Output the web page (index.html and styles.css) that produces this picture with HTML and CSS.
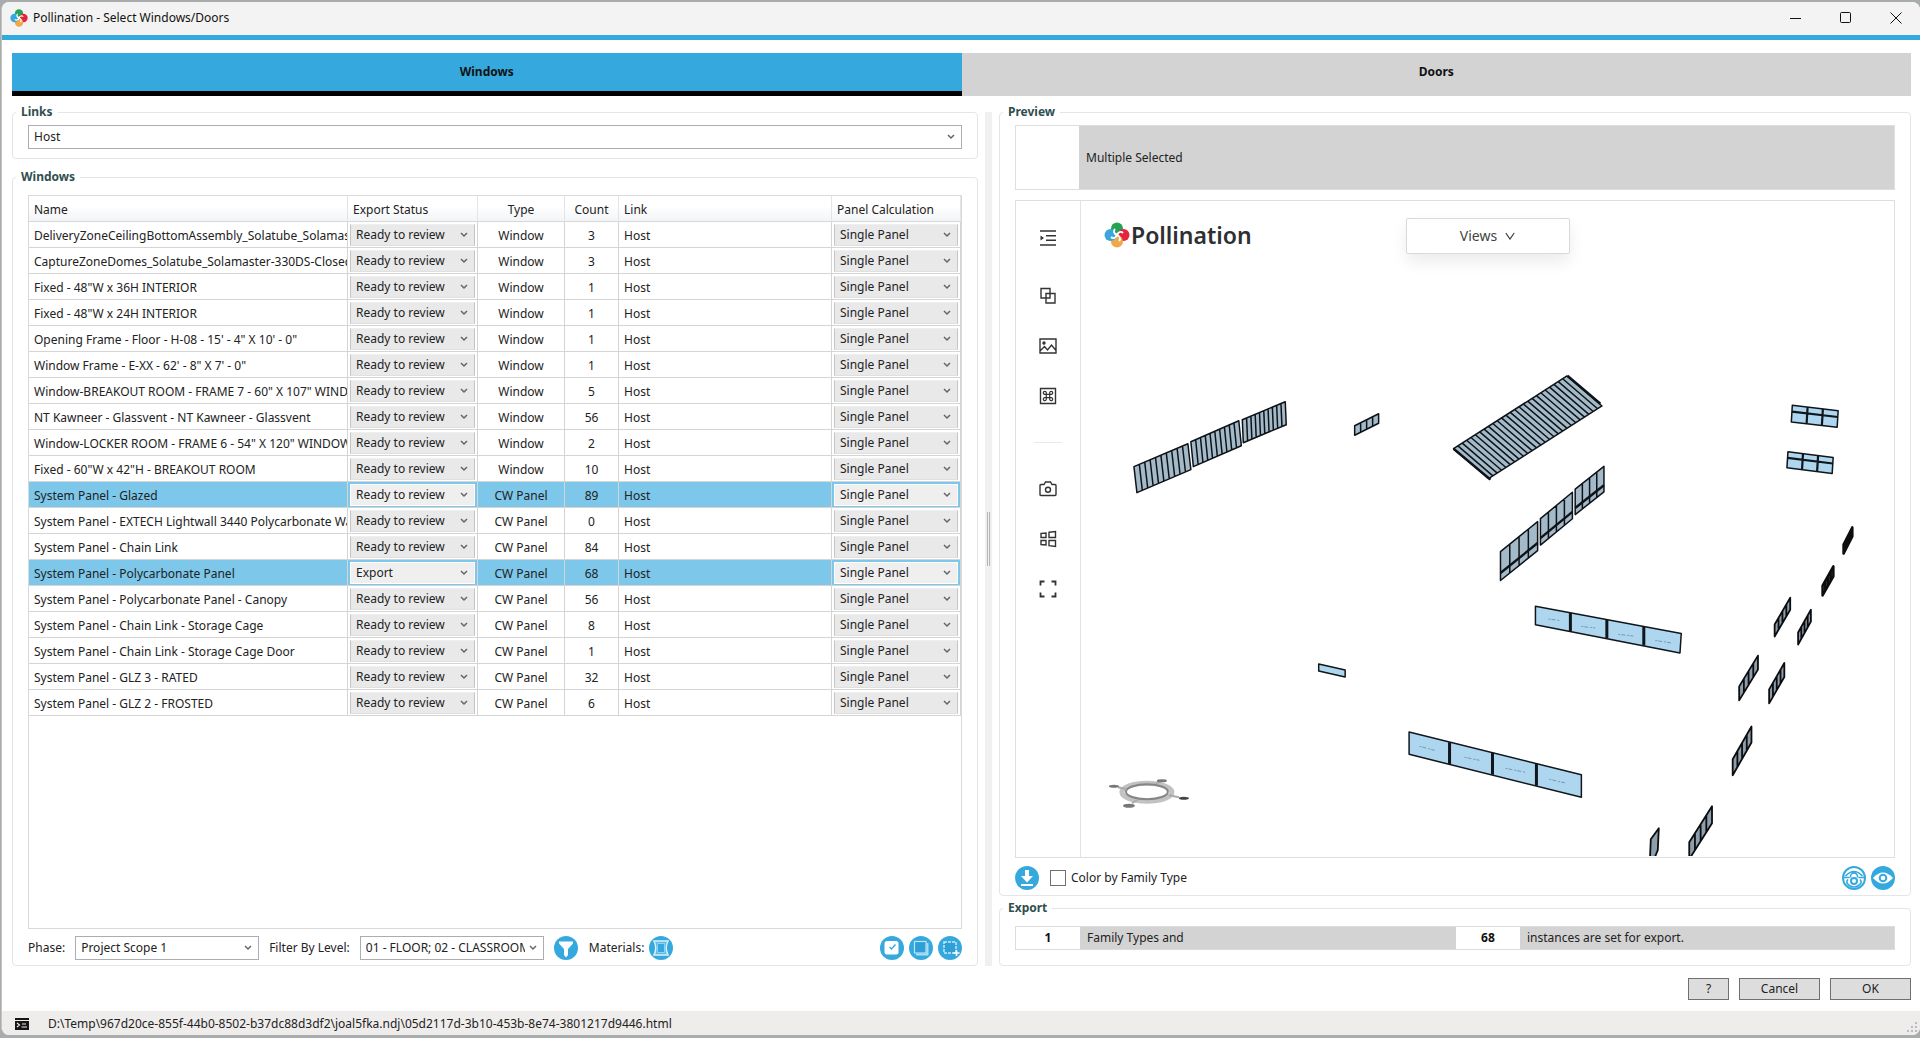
FILE: index.html
```html
<!DOCTYPE html>
<html lang="en">
<head>
<meta charset="utf-8">
<title>Pollination - Select Windows/Doors</title>
<link rel="stylesheet" href="styles.css">
</head>
<body>
<svg class="defs" width="0" height="0" aria-hidden="true">
  <defs>
    <symbol id="flower" viewBox="0 0 26 26">
      <circle cx="13" cy="6.5" r="6" fill="#23a455"/>
      <circle cx="19.5" cy="13" r="6" fill="#e5243f"/>
      <circle cx="13" cy="19.5" r="6" fill="#f0a848"/>
      <circle cx="6.5" cy="13" r="6" fill="#3aa6dc"/>
      <path d="M13 13C10 12 9 9 11 7M13 13c1-3 4-4 6-2M13 13c3 1 4 4 2 6M13 13c-1 3-4 4-6 2" fill="none" stroke="#fff" stroke-width="1.8"/>
      <circle cx="13" cy="13" r="1.8" fill="#fff"/>
    </symbol>
    <g id="slats10"><path vector-effect="non-scaling-stroke" d="M0 0H1V1H0ZM.1 0V1M.2 0V1M.3 0V1M.4 0V1M.5 0V1M.6 0V1M.7 0V1M.8 0V1M.9 0V1"/></g>
    <g id="slats26"><path vector-effect="non-scaling-stroke" d="M0 0H26V1H0ZM1 0V1M2 0V1M3 0V1M4 0V1M5 0V1M6 0V1M7 0V1M8 0V1M9 0V1M10 0V1M11 0V1M12 0V1M13 0V1M14 0V1M15 0V1M16 0V1M17 0V1M18 0V1M19 0V1M20 0V1M21 0V1M22 0V1M23 0V1M24 0V1M25 0V1"/></g>
    <g id="cells4"><path vector-effect="non-scaling-stroke" d="M0 0H4V1H0ZM1 0V1M2 0V1M3 0V1"/></g>
    <g id="curtain"><path vector-effect="non-scaling-stroke" d="M0 0H4V1H0ZM1 0V1M2 0V1M3 0V1"/><path vector-effect="non-scaling-stroke" stroke-width="2.4" d="M0 .74H4"/></g>
    <g id="transom"><path vector-effect="non-scaling-stroke" d="M0 0H3V1H0Z"/><path vector-effect="non-scaling-stroke" stroke-width="2.2" d="M1 0V1M2 0V1M0 .38H3"/></g>
  </defs>
</svg>
<div class="window">
  <header class="titlebar">
    <svg class="app-icon" aria-hidden="true"><use href="#flower"/></svg>
    <h1 class="title">Pollination - Select Windows/Doors</h1>
    <div class="window-buttons">
      <button type="button" class="window-button" aria-label="Minimize"><svg viewBox="0 0 12 12"><path d="M0 6.500H11"/></svg></button>
      <button type="button" class="window-button" aria-label="Maximize"><svg viewBox="0 0 12 12"><rect x=".5" y=".5" width="10" height="10" rx="1"/></svg></button>
      <button type="button" class="window-button" aria-label="Close"><svg viewBox="0 0 12 12"><path d="M.5.5l11 11M11.500.5l-11 11"/></svg></button>
    </div>
  </header>

  <nav class="tabs" role="tablist">
    <button type="button" class="tab tab-active" role="tab" aria-selected="true">Windows</button>
    <button type="button" class="tab" role="tab" aria-selected="false">Doors</button>
  </nav>

  <main class="content">
    <div class="column">
      <fieldset class="group group-links">
        <legend>Links</legend>
        <select class="combo combo-wide" aria-label="Links"><option>Host</option></select>
      </fieldset>

      <fieldset class="group group-windows">
        <legend>Windows</legend>
        <div class="grid-frame">
          <table class="grid">
            <colgroup><col class="col-name"><col class="col-status"><col class="col-type"><col class="col-count"><col class="col-link"><col class="col-panel"></colgroup>
            <thead>
              <tr><th>Name</th><th>Export Status</th><th class="mid">Type</th><th class="mid">Count</th><th>Link</th><th>Panel Calculation</th></tr>
            </thead>
            <tbody>
              <tr><td>DeliveryZoneCeilingBottomAssembly_Solatube_Solamaster</td><td class="pick"><select class="cell-combo" aria-label="Export status"><option>Ready to review</option><option>Export</option></select></td><td class="mid">Window</td><td class="mid">3</td><td>Host</td><td class="pick"><select class="cell-combo" aria-label="Panel calculation"><option>Single Panel</option></select></td></tr>
              <tr><td>CaptureZoneDomes_Solatube_Solamaster-330DS-Closed</td><td class="pick"><select class="cell-combo" aria-label="Export status"><option>Ready to review</option><option>Export</option></select></td><td class="mid">Window</td><td class="mid">3</td><td>Host</td><td class="pick"><select class="cell-combo" aria-label="Panel calculation"><option>Single Panel</option></select></td></tr>
              <tr><td>Fixed - 48"W x 36H INTERIOR</td><td class="pick"><select class="cell-combo" aria-label="Export status"><option>Ready to review</option><option>Export</option></select></td><td class="mid">Window</td><td class="mid">1</td><td>Host</td><td class="pick"><select class="cell-combo" aria-label="Panel calculation"><option>Single Panel</option></select></td></tr>
              <tr><td>Fixed - 48"W x 24H INTERIOR</td><td class="pick"><select class="cell-combo" aria-label="Export status"><option>Ready to review</option><option>Export</option></select></td><td class="mid">Window</td><td class="mid">1</td><td>Host</td><td class="pick"><select class="cell-combo" aria-label="Panel calculation"><option>Single Panel</option></select></td></tr>
              <tr><td>Opening Frame - Floor - H-08 - 15' - 4" X 10' - 0"</td><td class="pick"><select class="cell-combo" aria-label="Export status"><option>Ready to review</option><option>Export</option></select></td><td class="mid">Window</td><td class="mid">1</td><td>Host</td><td class="pick"><select class="cell-combo" aria-label="Panel calculation"><option>Single Panel</option></select></td></tr>
              <tr><td>Window Frame - E-XX - 62' - 8" X 7' - 0"</td><td class="pick"><select class="cell-combo" aria-label="Export status"><option>Ready to review</option><option>Export</option></select></td><td class="mid">Window</td><td class="mid">1</td><td>Host</td><td class="pick"><select class="cell-combo" aria-label="Panel calculation"><option>Single Panel</option></select></td></tr>
              <tr><td>Window-BREAKOUT ROOM - FRAME 7 - 60" X 107" WINDOW</td><td class="pick"><select class="cell-combo" aria-label="Export status"><option>Ready to review</option><option>Export</option></select></td><td class="mid">Window</td><td class="mid">5</td><td>Host</td><td class="pick"><select class="cell-combo" aria-label="Panel calculation"><option>Single Panel</option></select></td></tr>
              <tr><td>NT Kawneer - Glassvent - NT Kawneer - Glassvent</td><td class="pick"><select class="cell-combo" aria-label="Export status"><option>Ready to review</option><option>Export</option></select></td><td class="mid">Window</td><td class="mid">56</td><td>Host</td><td class="pick"><select class="cell-combo" aria-label="Panel calculation"><option>Single Panel</option></select></td></tr>
              <tr><td>Window-LOCKER ROOM - FRAME 6 - 54" X 120" WINDOW</td><td class="pick"><select class="cell-combo" aria-label="Export status"><option>Ready to review</option><option>Export</option></select></td><td class="mid">Window</td><td class="mid">2</td><td>Host</td><td class="pick"><select class="cell-combo" aria-label="Panel calculation"><option>Single Panel</option></select></td></tr>
              <tr><td>Fixed - 60"W x 42"H - BREAKOUT ROOM</td><td class="pick"><select class="cell-combo" aria-label="Export status"><option>Ready to review</option><option>Export</option></select></td><td class="mid">Window</td><td class="mid">10</td><td>Host</td><td class="pick"><select class="cell-combo" aria-label="Panel calculation"><option>Single Panel</option></select></td></tr>
              <tr class="selected"><td>System Panel - Glazed</td><td class="pick"><select class="cell-combo" aria-label="Export status"><option>Ready to review</option><option>Export</option></select></td><td class="mid">CW Panel</td><td class="mid">89</td><td>Host</td><td class="pick"><select class="cell-combo" aria-label="Panel calculation"><option>Single Panel</option></select></td></tr>
              <tr><td>System Panel - EXTECH Lightwall 3440 Polycarbonate Wall</td><td class="pick"><select class="cell-combo" aria-label="Export status"><option>Ready to review</option><option>Export</option></select></td><td class="mid">CW Panel</td><td class="mid">0</td><td>Host</td><td class="pick"><select class="cell-combo" aria-label="Panel calculation"><option>Single Panel</option></select></td></tr>
              <tr><td>System Panel - Chain Link</td><td class="pick"><select class="cell-combo" aria-label="Export status"><option>Ready to review</option><option>Export</option></select></td><td class="mid">CW Panel</td><td class="mid">84</td><td>Host</td><td class="pick"><select class="cell-combo" aria-label="Panel calculation"><option>Single Panel</option></select></td></tr>
              <tr class="selected"><td>System Panel - Polycarbonate Panel</td><td class="pick"><select class="cell-combo" aria-label="Export status"><option>Ready to review</option><option selected>Export</option></select></td><td class="mid">CW Panel</td><td class="mid">68</td><td>Host</td><td class="pick"><select class="cell-combo" aria-label="Panel calculation"><option>Single Panel</option></select></td></tr>
              <tr><td>System Panel - Polycarbonate Panel - Canopy</td><td class="pick"><select class="cell-combo" aria-label="Export status"><option>Ready to review</option><option>Export</option></select></td><td class="mid">CW Panel</td><td class="mid">56</td><td>Host</td><td class="pick"><select class="cell-combo" aria-label="Panel calculation"><option>Single Panel</option></select></td></tr>
              <tr><td>System Panel - Chain Link - Storage Cage</td><td class="pick"><select class="cell-combo" aria-label="Export status"><option>Ready to review</option><option>Export</option></select></td><td class="mid">CW Panel</td><td class="mid">8</td><td>Host</td><td class="pick"><select class="cell-combo" aria-label="Panel calculation"><option>Single Panel</option></select></td></tr>
              <tr><td>System Panel - Chain Link - Storage Cage Door</td><td class="pick"><select class="cell-combo" aria-label="Export status"><option>Ready to review</option><option>Export</option></select></td><td class="mid">CW Panel</td><td class="mid">1</td><td>Host</td><td class="pick"><select class="cell-combo" aria-label="Panel calculation"><option>Single Panel</option></select></td></tr>
              <tr><td>System Panel - GLZ 3 - RATED</td><td class="pick"><select class="cell-combo" aria-label="Export status"><option>Ready to review</option><option>Export</option></select></td><td class="mid">CW Panel</td><td class="mid">32</td><td>Host</td><td class="pick"><select class="cell-combo" aria-label="Panel calculation"><option>Single Panel</option></select></td></tr>
              <tr><td>System Panel - GLZ 2 - FROSTED</td><td class="pick"><select class="cell-combo" aria-label="Export status"><option>Ready to review</option><option>Export</option></select></td><td class="mid">CW Panel</td><td class="mid">6</td><td>Host</td><td class="pick"><select class="cell-combo" aria-label="Panel calculation"><option>Single Panel</option></select></td></tr>
            </tbody>
          </table>
        </div>
        <div class="filter-bar">
          <label for="phase">Phase:</label>
          <select id="phase" class="combo combo-filter"><option>Project Scope 1</option></select>
          <label for="level">Filter By Level:</label>
          <select id="level" class="combo combo-filter"><option>01 - FLOOR; 02 - CLASSROOM</option></select>
          <button type="button" class="round" aria-label="Filter"><svg viewBox="0 0 24 24"><circle cx="12" cy="12" r="12" fill="#35a9de"/><path d="M5 5.500h14v2l-5 5.500v6l-2 2.500-2-2.500v-6L5 7.500z" fill="#fff"/></svg></button>
          <span class="materials-label">Materials:</span>
          <button type="button" class="round" aria-label="Materials"><svg viewBox="0 0 24 24"><circle cx="12" cy="12" r="12" fill="#35a9de"/><path d="M5 5h14c-2.500 5-2.500 9 0 14H5c2.500-5 2.500-9 0-14z" fill="#5bbbe6" stroke="#d9f1fb" stroke-width="1.500"/><rect x="8.500" y="7.500" width="7" height="9" fill="#35a9de" stroke="#8fd2ef"/></svg></button>
          <span class="spacer"></span>
          <button type="button" class="round" aria-label="Check selected"><svg viewBox="0 0 24 24"><circle cx="12" cy="12" r="12" fill="#35a9de"/><rect x="4.500" y="5" width="14" height="13.500" rx="2.500" fill="#fff"/><path d="M9.500 11l2 2 4-4.500" fill="none" stroke="#35a9de" stroke-width="1.300"/></svg></button>
          <button type="button" class="round" aria-label="Select all"><svg viewBox="0 0 24 24"><circle cx="12" cy="12" r="12" fill="#35a9de"/><rect x="5.500" y="5.500" width="11.500" height="11.500" fill="#2f9fd6" stroke="#b9e5f8" stroke-width="1.200"/><path d="M18.500 7v11.500H7" fill="none" stroke="#a9def5" stroke-width="2"/></svg></button>
          <button type="button" class="round" aria-label="Select region"><svg viewBox="0 0 24 24"><circle cx="12" cy="12" r="12" fill="#35a9de"/><rect x="6" y="6" width="12" height="11" fill="#2f9fd6" stroke="#c7eafa" stroke-width="1.500" stroke-dasharray="3 1"/><path d="M15.500 17h6M18.500 14v6" stroke="#fff" stroke-width="1.500"/></svg></button>
        </div>
      </fieldset>
    </div>

    <div class="splitter"><span class="splitter-grip"></span></div>

    <div class="column column-right">
      <fieldset class="group group-preview">
        <legend>Preview</legend>
        <div class="selection">
          <div class="selection-thumb"></div>
          <p class="selection-text">Multiple Selected</p>
        </div>
        <div class="viewer">
          <div class="toolstrip">
            <button type="button" class="tool tool-first" aria-label="Expand tree"><svg viewBox="0 0 18 18"><path d="M1 2h16M7 6.700h10M7 11.300h10M1 16h16"/><path d="M1.500 6.500L5 9l-3.500 2.500z" fill="#333" stroke="none"/></svg></button>
            <button type="button" class="tool" aria-label="Layers"><svg viewBox="0 0 18 18"><path d="M2 1.500h9v9.500H2zM7 6.500h9V16H7z"/></svg></button>
            <button type="button" class="tool" aria-label="Image"><svg viewBox="0 0 18 18"><path d="M1 2h16v14H1zM1.500 13.500l4-4 3 3.500 4-5 4.500 5.500"/><circle cx="5" cy="6" r="1" fill="#333"/></svg></button>
            <button type="button" class="tool" aria-label="Shortcuts"><svg viewBox="0 0 18 18"><path d="M1.500 1.500h15v15h-15z"/><path stroke-width="1.200" d="M7.300 7.300h3.400v3.400H7.300zM7.300 7.300H6A1.500 1.500 0 1 1 7.300 6zM10.700 7.300V6A1.500 1.500 0 1 1 12 7.300zM10.700 10.700H12A1.500 1.500 0 1 1 10.700 12zM7.300 10.700V12A1.500 1.500 0 1 1 6 10.700z"/></svg></button>
            <hr class="tool-rule">
            <button type="button" class="tool" aria-label="Camera"><svg viewBox="0 0 18 18"><path d="M1 5.500Q1 4.500 2 4.500h3L6.500 2h5L13 4.500h3q1 0 1 1v9q0 1-1 1H2q-1 0-1-1z"/><circle cx="9" cy="9.800" r="2.500"/></svg></button>
            <button type="button" class="tool" aria-label="Panes"><svg viewBox="0 0 18 18"><path d="M2 3.500L7 3v4.500H2zM10 2.300l6.500-.8v6H10zM2 10.500h5V15l-5-.5zM10 10.500h6.500v6L10 15.700z"/></svg></button>
            <button type="button" class="tool" aria-label="Full screen"><svg viewBox="0 0 18 18"><path stroke-width="1.800" d="M1.500 5.500v-4h4M12.500 1.500h4v4M16.500 12.500v4h-4M5.500 16.500h-4v-4"/></svg></button>
          </div>
          <div class="canvas">
            <svg class="scene" viewBox="1081 201 814 656" preserveAspectRatio="xMinYMin meet" role="img" aria-label="Model preview">
              <g fill="#a5bac8" stroke="#0d1318" stroke-width="1.500" stroke-linejoin="round">
                <use href="#slats10" transform="matrix(54 -23 3 26 1134 467)"/>
                <use href="#slats10" transform="matrix(48 -21 2.500 25 1191 442)"/>
                <use href="#slats10" transform="matrix(43 -18 1 23 1242.500 420)"/>
                <use href="#cells4" transform="matrix(6 -3 0 9.500 1355 426)"/>
                <use href="#slats26" transform="matrix(4.370 -2.800 35 30 1454 449)"/>
                <path d="M1454 449l37 31M1568 376l33 28" stroke-width="2.500" fill="none"/>
                <use href="#curtain" transform="matrix(9.300 -7.500 0 29 1501 552)"/>
                <use href="#curtain" transform="matrix(8 -6.600 0 26.500 1541 519)"/>
                <use href="#curtain" transform="matrix(7.200 -5.700 0 25.500 1575.800 489.500)"/>
              </g>
              <g fill="#8d9fac" stroke="#0d0d0f" stroke-width="1.800" stroke-linejoin="round">
                <g stroke-width="2.500"><use href="#cells4" transform="matrix(2.200 -4.300 0 9 1844.500 545)"/>
                <use href="#cells4" transform="matrix(2.700 -4.800 0 10 1823.500 586)"/></g>
                <use href="#cells4" transform="matrix(3.900 -6.700 0 12 1775.500 625)"/>
                <use href="#cells4" transform="matrix(3.200 -5.700 0 12 1799 633)"/>
                <use href="#cells4" transform="matrix(4.700 -7.700 0 14 1740 687)"/>
                <use href="#cells4" transform="matrix(3.800 -6.600 0 14 1770 690)"/>
                <use href="#cells4" transform="matrix(4.700 -8.200 0 16 1733.500 760)"/>
                <use href="#cells4" transform="matrix(5.700 -9 0 17 1690 843)"/>
                <path d="M1651.500 840l8-11-1 22-5 12h-3z"/>
              </g>
              <g fill="#aed6ef" stroke="#10161b" stroke-width="1.500" stroke-linejoin="round">
                <use href="#transom" transform="matrix(15.300 1.800 -1 16.700 1793.200 405.500)"/>
                <use href="#transom" transform="matrix(15.100 1.900 -1 16.200 1788.800 452)"/>
                <path d="M1319 664.500l26.500 6v7l-26.500-6z"/>
                <path d="M1536 606.700L1682 634l-1.300 19.500L1536 625.300z"/>
                <path d="M1409.500 732.700L1582 775.500V798l-172.500-43z"/>
                <path stroke-width="3" d="M1571 613.500v18.500M1607.500 620.500V639M1644.500 627.500V646M1450 743v22M1493 753.500V775.500M1537 764.500V786.500"/>
              </g>
              <path d="M1549 619.500l11 1.500M1582 627l14 1.500M1619 635l15 1.500M1656 641l16 2.500M1420 747l15 4M1465 758l15 3M1506 769l20 4M1550 780l17 4" stroke="#7199b3" stroke-dasharray="2 1 4 2" fill="none"/>
              <g fill="none">
                <ellipse cx="1147" cy="793" rx="25" ry="9" stroke="#c2c2c2" stroke-width="5"/>
                <ellipse cx="1147" cy="792.500" rx="21" ry="7.500" stroke="#858585" stroke-width="2"/>
                <path d="M1118 788l9 2M1156 784l5-2M1169 796l10 2M1138 800l-6 4" stroke="#aaa" stroke-width="2"/>
              </g>
              <g fill="#777"><ellipse cx="1114" cy="787" rx="5" ry="1.500"/><ellipse cx="1162" cy="781.500" rx="5" ry="1.500"/><ellipse cx="1184" cy="799" rx="5" ry="1.500" fill="#444"/><ellipse cx="1129" cy="806.500" rx="6" ry="2"/></g>
            </svg>
            <div class="brand"><svg class="brand-icon" aria-hidden="true"><use href="#flower"/></svg><span>Pollination</span></div>
            <button type="button" class="views">Views <svg viewBox="0 0 10 8"><path d="M.8 1L5 7l4.200-6"/></svg></button>
          </div>
        </div>
        <div class="preview-bar">
          <button type="button" class="round" aria-label="Download"><svg viewBox="0 0 24 24"><circle cx="12" cy="12" r="12" fill="#35a9de"/><path d="M10 4h4v6h4l-6 6.500L6 10h4zM6 18h12v2H6z" fill="#fff"/></svg></button>
          <input type="checkbox" id="by-type" class="tick"><label for="by-type">Color by Family Type</label>
          <span class="spacer"></span>
          <button type="button" class="round" aria-label="Show in model"><svg viewBox="0 0 24 24"><circle cx="12" cy="12" r="11" fill="#fff" stroke="#35a9de" stroke-width="2"/><path d="M3.500 10q8.500-9 17 0M2 11.500h5.500M16.500 11.500H22M6 13.500q-3 3 1.500 6q4.500 3 9 0q4.500-3 1.500-6M8.500 11.500v-1a3.500 3.500 0 0 1 7 0v1" fill="none" stroke="#35a9de" stroke-width="1.600"/><circle cx="12" cy="15" r="3" fill="none" stroke="#35a9de" stroke-width="2"/></svg></button>
          <button type="button" class="round" aria-label="Toggle visibility"><svg viewBox="0 0 24 24"><circle cx="12" cy="12" r="12" fill="#35a9de"/><path d="M2 12q10-11 20 0-10 11-20 0z" fill="#fff"/><circle cx="12" cy="12" r="3.300" fill="#fff" stroke="#35a9de" stroke-width="2"/></svg></button>
        </div>
      </fieldset>

      <fieldset class="group group-export">
        <legend>Export</legend>
        <div class="export-row">
          <output class="export-number">1</output>
          <span class="export-text">Family Types and</span>
          <output class="export-number">68</output>
          <span class="export-text">instances are set for export.</span>
        </div>
      </fieldset>
    </div>
  </main>

  <div class="actions">
    <button type="button" class="action action-help">?</button>
    <button type="button" class="action">Cancel</button>
    <button type="button" class="action">OK</button>
  </div>

  <footer class="statusbar">
    <svg class="console" viewBox="0 0 14 14" aria-hidden="true"><path d="M0 1h14v12H0z" fill="#151515"/><path d="M0 3.500h14" stroke="#efedec"/><path d="M2 6l2.500 2L2 10M6.500 10H12M7 7h4" fill="none" stroke="#efedec" stroke-width="1.200"/></svg>
    <span>D:\Temp\967d20ce-855f-44b0-8502-b37dc88d3df2\joal5fka.ndj\05d2117d-3b10-453b-8e74-3801217d9446.html</span>
    <svg class="size-grip" viewBox="0 0 12 12" aria-hidden="true"><path d="M10 0v2M10 4v2M6 4v2M10 8v2M6 8v2M2 8v2" stroke="#b3bdcc" stroke-width="2"/></svg>
  </footer>
</div>
</body>
</html>
```
FILE: styles.css
```css
* { box-sizing: border-box; }

body {
  margin: 0;
  display: flex;
  min-height: 100vh;
  padding: 2px 0 3px 1px;
  background: #a9acac;
  color: #222;
  font: 12px/16px "Noto Sans", "Open Sans", sans-serif;
}

button, select, input { font: inherit; color: inherit; margin: 0; }
button { padding: 0; border: 0; background: none; }
.defs { position: absolute; }

.window {
  flex: 1;
  min-width: 0;
  display: flex;
  flex-direction: column;
  overflow: hidden;
  border-left: 1px solid #c4c4c4;
  border-radius: 8px;
  background: #fff;
}

/* Title bar */
.titlebar {
  display: flex;
  align-items: center;
  height: 38px;
  padding: 0 18px 2px 8px;
  border-bottom: 5px solid #35a9de;
  background: #f3f3f3;
}
.app-icon { width: 18px; height: 18px; }
.title { flex: 1; margin: 0 0 0 5px; font-size: 12px; font-weight: 400; color: #111; }
.window-buttons { display: flex; gap: 38px; }
.window-button { display: flex; width: 12px; height: 12px; }
.window-button svg { width: 12px; height: 12px; fill: none; stroke: #111; }

/* Tabs */
.tabs {
  display: grid;
  grid-template-columns: 1fr 1fr;
  margin: 13px 9px 0 10px;
}
.tab {
  height: 43px;
  border-bottom: 5px solid #d3d3d3;
  background: #d3d3d3;
  font-weight: 700;
  color: #111;
}
.tab-active { border-bottom-color: #000; background: #35a9de; }

/* Two columns */
.content {
  flex: 1;
  display: grid;
  grid-template-columns: minmax(0, 966fr) 7px minmax(0, 912fr);
  gap: 7px;
  padding: 8px 9px 0 10px;
}
.column { display: flex; flex-direction: column; gap: 10px; }
.column-right { gap: 4px; }
.splitter { display: flex; align-items: center; justify-content: center; margin-top: 8px; background: #f0f0f0; }
.splitter-grip { width: 3px; height: 54px; border: solid #b5b5b5; border-width: 0 1px; }

.group {
  min-width: 0;
  margin: 0;
  border: 1px solid #e2e6e6;
  border-radius: 4px;
}
.group legend { margin-left: -12px; padding: 0 5px; font-weight: 700; color: #2f4f4f; }
.group-links { padding: 5px 15px 9px; }
.group-windows { flex: 1; display: flex; flex-direction: column; padding: 10px 15px 5px; }
.group-preview { flex: 1; display: flex; flex-direction: column; padding: 5px 15px; }
.group-export { padding: 10px 15px 15px; }

/* Drop-downs */
.combo, .cell-combo {
  display: block;
  appearance: none;
  border: 1px solid #abadb3;
  border-radius: 0;
  background: #fff url("data:image/svg+xml,%3Csvg xmlns='http://www.w3.org/2000/svg' width='8' height='6'%3E%3Cpath d='M1 1l3 3 3-3' fill='none' stroke='%23666' stroke-width='1.500'/%3E%3C/svg%3E") no-repeat right 6px center;
}
.combo { height: 24px; padding: 0 18px 0 5px; }
.combo-wide { width: 100%; }
.combo-filter { width: 184px; }
.cell-combo {
  width: 100%;
  height: 22px;
  padding: 0 16px 0 5px;
  border-color: #efefef #c4c4c4 #e0e0e0;
  background-color: #e9e9e9;
}

/* Table */
.grid-frame { flex: 1; border: 1px solid #d9d9d9; }
.grid { width: 100%; table-layout: fixed; border-collapse: separate; border-spacing: 0; }
.col-name { width: 319px; }
.col-status { width: 130px; }
.col-type { width: 87px; }
.col-count { width: 54px; }
.col-link { width: 213px; }
.grid th {
  height: 26px;
  padding: 2px 5px 0;
  border-right: 1px solid #e2e5e8;
  border-bottom: 1px solid #d5d8da;
  background: linear-gradient(#fff 40%, #f2f4f6);
  text-align: left;
  font-weight: 400;
}
.grid td {
  height: 26px;
  padding: 2px 0 0 5px;
  border-right: 1px solid #d5d5d5;
  border-bottom: 1px solid #d5d5d5;
  overflow: hidden;
  white-space: nowrap;
}
.grid td.pick { padding: 1px 2px; }
.grid .mid { padding-left: 0; padding-right: 0; text-align: center; }
.selected { background: #7cc7ea; }
.selected .cell-combo { border-color: #fff; background-color: #efefef; }

/* Bars below the table and the viewer */
.filter-bar { display: flex; align-items: center; gap: 5px; padding-top: 7px; }
.filter-bar .combo-filter { margin: 0 5px; }
.filter-bar .materials-label { margin-left: 6px; }
.spacer { flex: 1; }
.round { display: flex; flex: none; width: 24px; height: 24px; }
.round svg { width: 24px; height: 24px; fill: none; }

/* Preview */
.selection { display: flex; height: 65px; border: 1px solid #dedede; }
.selection-thumb { width: 63px; }
.selection-text { flex: 1; display: flex; align-items: center; margin: 0; padding-left: 7px; background: #d3d3d3; }
.viewer { flex: 1; display: flex; margin-top: 10px; border: 1px solid #dfdfdf; }
.toolstrip {
  display: flex;
  flex-direction: column;
  align-items: center;
  gap: 32px;
  width: 65px;
  padding-top: 28px;
  border-right: 1px solid #e3e3e3;
}
.tool { display: flex; width: 18px; height: 18px; }
.tool-first { margin-bottom: 8px; }
.tool svg { width: 18px; height: 18px; fill: none; stroke: #333; stroke-width: 1.4px; }
.tool-rule { width: 28px; height: 1px; margin: 5px 0; border: 0; background: #e8e8e8; }
.canvas { position: relative; flex: 1; min-width: 0; }
.scene { display: block; width: 100%; }
.brand {
  position: absolute;
  top: 18px;
  left: 23px;
  display: flex;
  align-items: center;
  gap: 1px;
  font-size: 23px;
  line-height: 32px;
  font-weight: 600;
  color: #2d2f33;
}
.brand-icon { width: 26px; height: 26px; }
.views {
  position: absolute;
  top: 17px;
  left: 50%;
  display: flex;
  align-items: center;
  justify-content: center;
  gap: 8px;
  width: 164px;
  height: 36px;
  margin-left: -82px;
  border: 1px solid #d9d9d9;
  border-radius: 2px;
  background: #fff;
  box-shadow: 0 8px 16px rgba(0, 0, 0, .08);
  font-size: 14px;
  color: #444;
}
.views svg { width: 10px; height: 8px; fill: none; stroke: #444; stroke-width: 1.3px; }
.preview-bar { display: flex; align-items: center; gap: 5px; padding-top: 8px; }
.tick {
  appearance: none;
  width: 16px;
  height: 16px;
  margin-left: 6px;
  border: 1px solid #707070;
  background: #fff;
}

/* Export summary */
.export-row { display: grid; grid-template-columns: 64px 377fr 64px 375fr; height: 24px; border: 1px solid #dcdcdc; line-height: 22px; }
.export-number { font-weight: 700; text-align: center; color: #111; }
.export-text { padding-left: 7px; background: #d3d3d3; }

/* Dialog buttons */
.actions { display: flex; justify-content: flex-end; gap: 10px; padding: 12px 9px 11px; }
.action { width: 81px; height: 22px; border: 1px solid #707070; background: #ddd; line-height: 18px; }
.action-help { width: 41px; }

/* Status bar */
.statusbar { display: flex; align-items: center; height: 24px; padding: 1px 0 0 13px; background: #efedec; }
.console { width: 14px; height: 14px; margin-right: 19px; }
.size-grip { width: 12px; height: 12px; margin: 8px 2px 0 auto; }
```
